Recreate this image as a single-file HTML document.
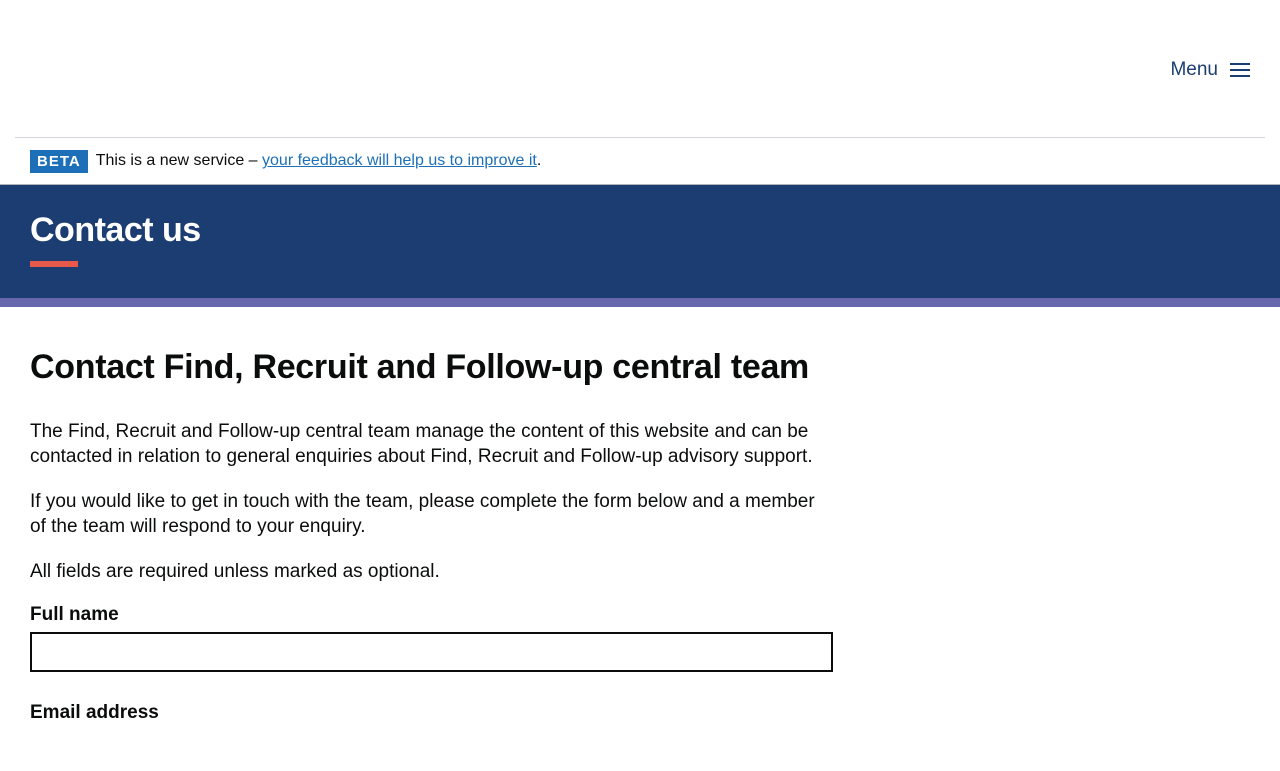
<!DOCTYPE html>
<html><head><style>
*{box-sizing:border-box;margin:0;padding:0}
body{width:1280px;height:720px;overflow:hidden;font-family:"Liberation Sans",sans-serif;color:#0b0c0c;background:#fff}
.top{height:138px;position:relative;border-bottom:1px solid #d3d7db;margin:0 15px}
.menu{position:absolute;right:15px;top:59px;color:#1b3d6f;font-size:19px;display:flex;align-items:center;gap:12px}
.beta{height:47px;display:flex;align-items:center;padding-left:30px;font-size:16px;border-bottom:1px solid #b1b4b6}
.tag{background:#1d70b8;color:#fff;font-weight:bold;letter-spacing:1px;padding:3px 7px;margin-right:8px;font-size:15px}
.beta a{color:#1d70b8}
.hero{background:#1b3d71;height:113px;padding:25px 30px 0;color:#fff}
.hero h1{font-size:34px;letter-spacing:-0.5px;line-height:40px}
.hero .u{width:48px;height:6px;background:#e8594a;margin-top:11px}
.strip{height:9px;background:#6866ad}
main{padding:41px 30px}
h2{font-size:34px;letter-spacing:-0.3px;margin-bottom:32px}
p{font-size:19px;line-height:25px;margin-bottom:20px;width:800px}
label{font-weight:bold;font-size:19px;display:block;margin-top:5px;margin-bottom:6px}
.in{width:803px;height:40px;border:2px solid #0b0c0c;margin-bottom:30px}
</style></head><body>
<div class="top"><div class="menu">Menu <svg width="20" height="16"><path d="M0 2H20M0 8H20M0 14H20" stroke="#1b3d6f" stroke-width="2"/></svg></div></div>
<div class="beta"><span class="tag">BETA</span>This is a new service –&nbsp;<a href="#">your feedback will help us to improve it</a>.</div>
<div class="hero"><h1>Contact us</h1><div class="u"></div></div>
<div class="strip"></div>
<main>
<h2>Contact Find, Recruit and Follow-up central team</h2>
<p>The Find, Recruit and Follow-up central team manage the content of this website and can be contacted in relation to general enquiries about Find, Recruit and Follow-up advisory support.</p>
<p>If you would like to get in touch with the team, please complete the form below and a member of the team will respond to your enquiry.</p>
<p>All fields are required unless marked as optional.</p>
<label>Full name</label><div class="in"></div>
<label>Email address</label>
</main>
</body></html>
